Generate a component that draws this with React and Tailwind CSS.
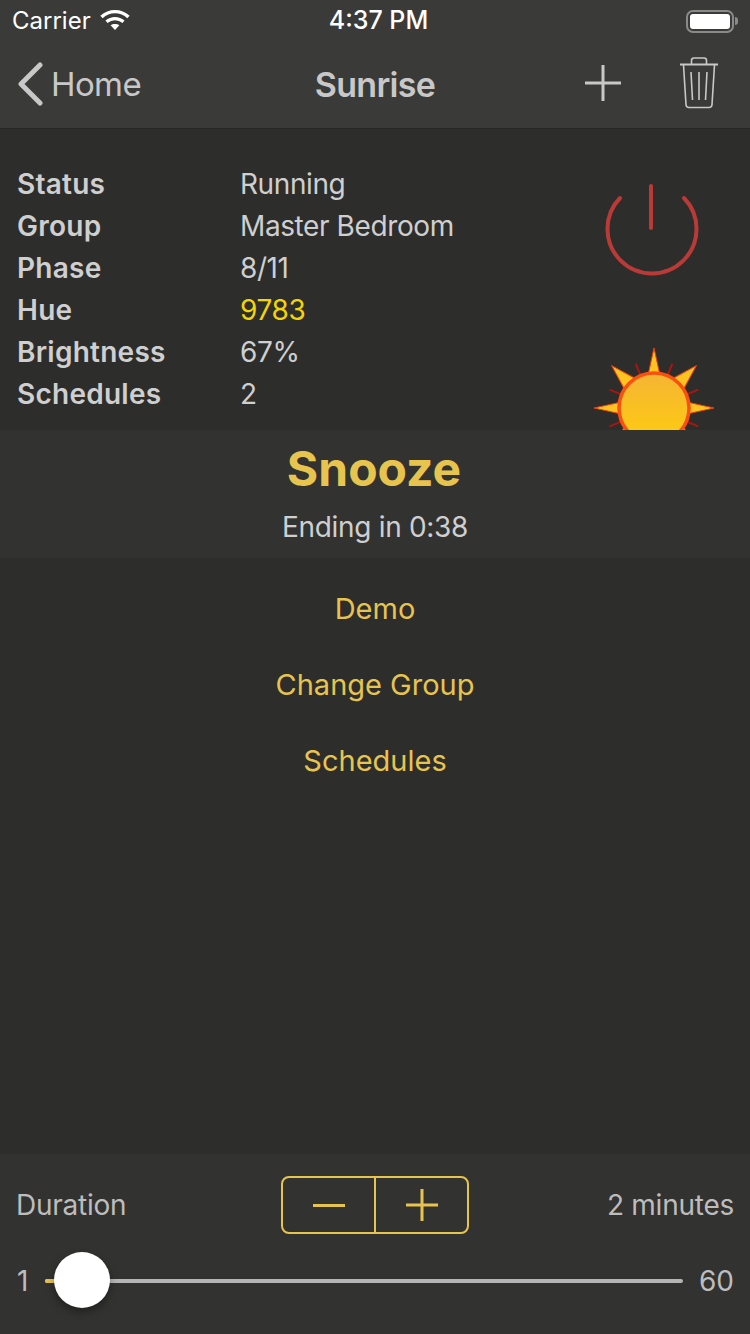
import React from "react";

const font = { fontFamily: "Inter, 'Liberation Sans', sans-serif" };

const rows = [
  ["Status", "Running"],
  ["Group", "Master Bedroom"],
  ["Phase", "8/11"],
  ["Hue", "9783", true],
  ["Brightness", "67%"],
  ["Schedules", "2"],
];

function Wifi() {
  return (
    <svg width="30" height="22" viewBox="0 0 30 22" fill="none">
      <path d="M1.500 8C9.300 0.800 20.700 0.800 28.500 8" stroke="white" strokeWidth="3.4" />
      <path d="M6.500 12.800C11.500 8.600 18.500 8.600 23.500 12.800" stroke="white" strokeWidth="3.200" />
      <path d="M15 21L10.600 16.300C13 14.500 17 14.500 19.400 16.300Z" fill="white" />
    </svg>
  );
}

function Battery() {
  return (
    <div className="flex items-center">
      <div className="w-[48px] h-[23px] rounded-[7px] border-2 border-[#8a8a8a] p-[2px]">
        <div className="w-full h-full bg-white rounded-[3px]" />
      </div>
      <div className="w-[3px] h-[8px] bg-[#8a8a8a] rounded-r-sm ml-[1px]" />
    </div>
  );
}

function Trash() {
  return (
    <svg width="40" height="52" viewBox="0 0 40 52" fill="none" stroke="#c8c8c8" strokeWidth="1.600">
      <path d="M1 7.500H39" strokeWidth="2" />
      <path d="M12.500 7V3.500C12.500 2 13.500 1 15 1H25C26.500 1 27.500 2 27.500 3.500V7" />
      <path d="M4.500 8L7 47.500C7.100 49.500 8.200 50.500 10 50.500H30C31.800 50.500 32.900 49.500 33 47.500L35.500 8" />
      <path d="M12 15L13.500 43M20 15V43M28 15L26.500 43" />
    </svg>
  );
}

function Power() {
  return (
    <svg width="96" height="96" viewBox="0 0 96 96" fill="none" stroke="#b93a37" strokeWidth="4" strokeLinecap="round">
      <path d="M16 15A44.500 44.500 0 1 0 80 15" />
      <path d="M47 3V45" />
    </svg>
  );
}

function Sun() {
  const spikes = [0, 45, 90, 135, 180, 225, 270, 315];
  const ticks = [22.5, 67.5, 112.5, 157.5, 202.5, 247.5, 292.5, 337.5];
  return (
    <svg width="124" height="124" viewBox="-62 -62 124 124">
      <defs>
        <linearGradient id="sunFill" x1="0" y1="0" x2="0" y2="1">
          <stop offset="0" stopColor="#f4b534" />
          <stop offset="1" stopColor="#ffcc10" />
        </linearGradient>
      </defs>
      {ticks.map((a) => (
        <line key={a} x1="0" y1="-35" x2="0" y2="-48" stroke="#a8170f" strokeWidth="2" transform={`rotate(${a})`} />
      ))}
      {spikes.map((a) => (
        <polygon
          key={a}
          points={a % 90 === 0 ? "-5.500,-35 0,-60 5.500,-35" : "-8,-33 0,-60 8,-33"}
          fill="#fdc321"
          stroke="#e8400f"
          strokeWidth="1"
          strokeLinejoin="round"
          transform={`rotate(${a})`}
        />
      ))}
      <circle r="35" fill="url(#sunFill)" stroke="#f9500f" strokeWidth="3.500" />
    </svg>
  );
}

function Row({ label, value, yellow }) {
  return (
    <div className="flex h-[42px] items-center">
      <div className="w-[223px] text-[28px] font-semibold text-[#cfcfcf] tracking-[0.25px]">{label}</div>
      <div className={`text-[28px] tracking-[-0.4px] ${yellow ? "text-[#f3d404]" : "text-[#cfcfcf]"}`}>{value}</div>
    </div>
  );
}

export default function App() {
  return (
    <div className="w-[750px] h-[1334px] flex flex-col bg-[#2d2d2c] overflow-hidden" style={font}>
      {/* nav */}
      <div className="h-[129px] bg-[#3a3a39] border-b border-[#262626] shrink-0">
        <div className="h-[40px] pt-[2px] grid grid-cols-[1fr_auto_1fr] items-center pl-[12px] pr-[12px]">
          <div className="flex items-center">
            <span className="text-[24px] text-white">Carrier</span>
            <span className="ml-[9px] mb-[2px]"><Wifi /></span>
          </div>
          <span className="ml-[7px] text-[25px] font-medium text-white">4:37 PM</span>
          <div className="flex justify-end"><Battery /></div>
        </div>
        <div className="h-[88px] grid grid-cols-[1fr_auto_1fr] items-center px-[17px]">
          <div className="flex items-center">
            <svg width="26" height="44" viewBox="0 0 26 44" fill="none" stroke="#c8c8c8" strokeWidth="5" strokeLinecap="round" strokeLinejoin="round">
              <path d="M23 3L4 22L23 41" />
            </svg>
            <span className="ml-[8px] mt-[2px] text-[33px] text-[#c8c8c8] tracking-[-0.6px]">Home</span>
          </div>
          <span className="text-[34px] font-semibold text-[#c8c8c8] tracking-[-0.7px]">Sunrise</span>
          <div className="flex items-center justify-end">
            <svg width="36" height="36" viewBox="0 0 36 36" stroke="#c8c8c8" strokeWidth="3" className="mr-[58px] mb-[2px]">
              <path d="M0 18H36M18 0V36" />
            </svg>
            <span className="mr-[14px] mb-[3px]"><Trash /></span>
          </div>
        </div>
      </div>

      {/* info */}
      <div className="h-[301px] shrink-0 overflow-hidden flex justify-between pl-[17px] pt-[34px]">
        <div>
          {rows.map(([l, v, y]) => <Row key={l} label={l} value={v} yellow={y} />)}
        </div>
        <div className="w-[124px] mr-[34px] flex flex-col items-center">
          <div className="mt-[20px] mr-[5px]"><Power /></div>
          <div className="mt-[67px]"><Sun /></div>
        </div>
      </div>

      {/* snooze */}
      <div className="h-[128px] shrink-0 bg-[#323231] flex flex-col items-center">
        <div className="mt-[8px] mr-[2px] text-[48px] font-bold text-[#e7c44e] leading-[62px]">Snooze</div>
        <div className="mt-[10px] text-[28px] text-[#cfcfcf] leading-[34px] tracking-[-0.3px]">Ending in 0:38</div>
      </div>

      {/* actions */}
      <div className="flex-1 flex flex-col items-center pt-[13px]">
        {["Demo", "Change Group", "Schedules"].map((t) => (
          <div key={t} className="h-[76px] flex items-center text-[29px] text-[#e7c44e]">{t}</div>
        ))}
      </div>

      {/* duration */}
      <div className="h-[180px] shrink-0 bg-[#323231] px-[16px] pt-[22px]">
        <div className="grid grid-cols-[1fr_auto_1fr] items-center h-[58px]">
          <span className="text-[28px] text-[#bdbdbd] tracking-[-0.25px]">Duration</span>
          <div className="flex w-[188px] h-[58px] border-2 border-[#e7c44e] rounded-[8px]">
            <div className="flex-1 flex items-center justify-center border-r-2 border-[#e7c44e]">
              <div className="w-[32px] h-[3px] bg-[#e7c44e]" />
            </div>
            <div className="flex-1 flex items-center justify-center">
              <svg width="32" height="32" viewBox="0 0 32 32" stroke="#e7c44e" strokeWidth="3">
                <path d="M0 16H32M16 0V32" />
              </svg>
            </div>
          </div>
          <span className="text-[28px] text-[#bdbdbd] text-right tracking-[-0.25px]">2 minutes</span>
        </div>
        <div className="flex items-center mt-[19px] h-[56px]">
          <span className="text-[28px] text-[#bdbdbd] w-[29px] pl-[1px]">1</span>
          <div className="relative flex-1 h-[4px] bg-[#b5b5b5] rounded-full">
            <div className="absolute left-0 top-0 h-[4px] w-[12px] bg-[#e7c44e] rounded-l-full" />
            <div className="absolute left-[9px] top-[-27px] w-[56px] h-[56px] rounded-full bg-white shadow-[0_4px_8px_rgba(0,0,0,0.35)]" />
          </div>
          <span className="text-[28px] text-[#bdbdbd] w-[51px] text-right">60</span>
        </div>
      </div>
    </div>
  );
}
